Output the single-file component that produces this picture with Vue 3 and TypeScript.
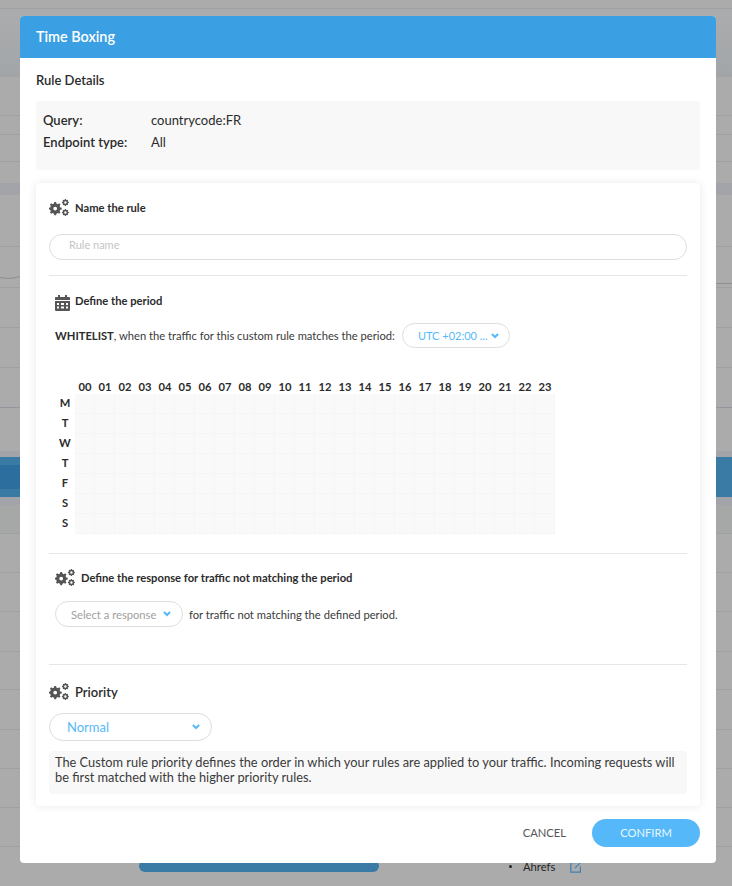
<script setup lang="ts">
const hours = Array.from({ length: 24 }, (_, i) => String(i).padStart(2, '0'))
const days = ['M', 'T', 'W', 'T', 'F', 'S', 'S']
const cellCount = 24 * 7

function gearPath(cx: number, cy: number, outer: number, root: number, hole: number, teeth: number): string {
  const parts: string[] = []
  const step = (Math.PI * 2) / teeth
  for (let i = 0; i < teeth; i++) {
    const a = i * step
    const pts: Array<[number, number]> = [
      [a - step * 0.3, root],
      [a - step * 0.17, outer],
      [a + step * 0.17, outer],
      [a + step * 0.3, root],
    ]
    for (const [ang, r] of pts) {
      const x = (cx + Math.cos(ang) * r).toFixed(2)
      const y = (cy + Math.sin(ang) * r).toFixed(2)
      parts.push(`${parts.length ? 'L' : 'M'}${x} ${y}`)
    }
  }
  parts.push('Z')
  parts.push(`M${cx - hole} ${cy}a${hole} ${hole} 0 1 0 ${hole * 2} 0a${hole} ${hole} 0 1 0 ${-hole * 2} 0Z`)
  return parts.join('')
}

const gears = [
  gearPath(6.2, 9.6, 6.6, 5.2, 1.9, 8),
  gearPath(16.4, 3.5, 3.5, 2.8, 1.2, 8),
  gearPath(16.4, 13.5, 3.5, 2.8, 1.2, 8),
].join('')

interface BgRow { h: number; kind: string }
const bgRows: BgRow[] = [
  { h: 9, kind: 'line' },
  { h: 68, kind: 'band-top' },
  { h: 39, kind: 'line' },
  { h: 19, kind: 'line' },
  { h: 27, kind: 'line' },
  { h: 21, kind: '' },
  { h: 12, kind: 'tint' },
  { h: 52, kind: 'line' },
  { h: 41, kind: 'line' },
  { h: 40, kind: 'line' },
  { h: 40, kind: 'line' },
  { h: 40, kind: 'line dark' },
  { h: 43, kind: '' },
  { h: 6, kind: 'tint' },
  { h: 40, kind: 'blue' },
  { h: 8, kind: 'tint' },
  { h: 29, kind: 'soft line' },
  { h: 39, kind: 'line' },
  { h: 39, kind: 'line' },
  { h: 40, kind: 'line' },
  { h: 38, kind: 'line' },
  { h: 40, kind: 'line' },
  { h: 39, kind: 'line' },
  { h: 39, kind: 'line' },
  { h: 39, kind: 'line' },
]
</script>

<template>
  <div class="page">
    <div class="backdrop">
      <div v-for="(r, i) in bgRows" :key="i" class="bg-row" :class="r.kind" :style="{ height: r.h + 'px' }">
        <div v-if="r.kind === 'blue'" class="bg-pill"></div>
      </div>
    </div>
    <svg class="bg-curve" width="20" height="8" viewBox="0 0 20 8" fill="none" stroke="#8f8f8f" stroke-width="1">
      <path d="M0 4.500C7 6 14 5.500 20 3.500" />
    </svg>
    <div class="bg-double"></div>

    <div class="under">
      <div class="under-bar"></div>
      <div class="under-item">
        <span class="bullet"></span>
        <span>Ahrefs</span>
        <svg width="12" height="12" viewBox="0 0 12 12" fill="none" stroke="#3d82b3" stroke-width="1.200">
          <path d="M6.500 1.600H.8v9.600h9.600V5.500M5 7.200 11 1.200" />
        </svg>
      </div>
    </div>

    <section class="modal">
      <header class="modal-head">Time Boxing</header>

      <div class="modal-body">
        <h2 class="rule-title">Rule Details</h2>

        <div class="details">
          <div class="detail-row"><b>Query:</b><span>countrycode:FR</span></div>
          <div class="detail-row"><b>Endpoint type:</b><span>All</span></div>
        </div>

        <div class="card">
          <div class="block name-block">
            <div class="title">
              <svg class="gears" width="20" height="17" viewBox="0 0 20 17"><path fill-rule="evenodd" :d="gears" /></svg>
              <span>Name the rule</span>
            </div>
            <div class="input">Rule name</div>
          </div>

          <div class="block period-block">
            <div class="title inset">
              <svg class="cal" width="15" height="16" viewBox="0 0 15 16">
                <path fill-rule="evenodd" d="M3 0h2v2h5V0h2v2h2a1 1 0 0 1 1 1v2H0V3a1 1 0 0 1 1-1h2zM0 6h15v9a1 1 0 0 1-1 1H1a1 1 0 0 1-1-1zm2 2v2h2V8zm4 0v2h3V8zm5 0v2h2V8zm-9 3.500v2h2v-2zm4 0v2h3v-2zm5 0v2h2v-2z" />
              </svg>
              <span>Define the period</span>
            </div>

            <div class="whitelist">
              <span><b>WHITELIST</b>, when the traffic for this custom rule matches the period:</span>
              <div class="select utc">
                <span>UTC +02:00 ...</span>
                <svg class="chev" width="8" height="6" viewBox="0 0 8 6"><path d="M.9 1 4 4 7.100 1" /></svg>
              </div>
            </div>

            <div class="grid-wrap">
              <div class="hours">
                <span v-for="h in hours" :key="h">{{ h }}</span>
              </div>
              <div class="grid-row">
                <div class="days">
                  <span v-for="(d, i) in days" :key="i">{{ d }}</span>
                </div>
                <div class="cells">
                  <i v-for="n in cellCount" :key="n"></i>
                </div>
              </div>
            </div>
          </div>

          <div class="block response-block">
            <div class="title inset">
              <svg class="gears" width="20" height="17" viewBox="0 0 20 17"><path fill-rule="evenodd" :d="gears" /></svg>
              <span>Define the response for traffic not matching the period</span>
            </div>
            <div class="response-line">
              <div class="select response">
                <span>Select a response</span>
                <svg class="chev" width="8" height="6" viewBox="0 0 8 6"><path d="M.9 1 4 4 7.100 1" /></svg>
              </div>
              <span>for traffic not matching the defined period.</span>
            </div>
          </div>

          <div class="block priority-block">
            <div class="title big">
              <svg class="gears" width="20" height="17" viewBox="0 0 20 17"><path fill-rule="evenodd" :d="gears" /></svg>
              <span>Priority</span>
            </div>
            <div class="select priority">
              <span>Normal</span>
              <svg class="chev" width="8" height="6" viewBox="0 0 8 6"><path d="M.9 1 4 4 7.100 1" /></svg>
            </div>
            <p class="note">The Custom rule priority defines the order in which your rules are applied to your traffic. Incoming requests will be first matched with the higher priority rules.</p>
          </div>
        </div>

        <footer class="actions">
          <button class="cancel" type="button">CANCEL</button>
          <button class="confirm" type="button">CONFIRM</button>
        </footer>
      </div>
    </section>
  </div>
</template>

<style>
html, body { margin: 0; background: #ababab; }
</style>

<style scoped>
.page {
  position: relative;
  width: 732px;
  height: 886px;
  overflow: hidden;
  background: #ababab;
  font-family: Lato, "Open Sans", sans-serif;
  color: #2b2b2b;
}
.backdrop {
  position: absolute;
  inset: 0;
  display: flex;
  flex-direction: column;
}
.bg-row { flex: none; box-sizing: border-box; display: flex; align-items: center; }
.bg-row.line { border-bottom: 1px solid #a0a0a0; }
.bg-row.line.dark { border-bottom-color: #96949c; }
.bg-row.band-top { background: linear-gradient(#a9abac 20%, #a2a5a8); }
.bg-row.tint { background: #a3a4aa; }
.bg-row.soft { background: #a6a8a8; }
.bg-row.blue { background: #3a7ba6; }
.bg-pill { width: 30px; height: 24px; border-radius: 0 12px 12px 0; background: #2c6f9e; }
.bg-curve { position: absolute; left: 0; top: 273px; }
.bg-double { position: absolute; left: 716px; top: 283px; width: 16px; height: 1px; background: #8f8f8f; }

.under { position: absolute; left: 139px; top: 860px; width: 460px; height: 20px; }
.under-bar {
  position: absolute; left: 0; top: 0; width: 240px; height: 12px;
  background: #3a7ba6; border-radius: 6px;
}
.under-item {
  position: absolute; left: 370px; top: -1px; display: flex; align-items: center;
  gap: 8px; font-size: 11.200px; color: #262626;
}
.under-item svg { margin-left: 7px; margin-top: 2px; }
.bullet { width: 3px; height: 3px; border-radius: 50%; background: #262626; margin-right: 3px; }

.modal {
  position: absolute;
  left: 20px;
  top: 16px;
  width: 696px;
  height: 847px;
  background: #fff;
  border-radius: 4px;
  overflow: hidden;
  display: flex;
  flex-direction: column;
}
.modal-head {
  height: 42px;
  flex: none;
  box-sizing: border-box;
  padding: 11px 16px 0;
  background: #3ba0e3;
  color: #fff;
  font-size: 14.400px;
  font-weight: 600;
  line-height: 19px;
}
.modal-body { padding: 0 16px; display: flex; flex-direction: column; flex: 1; }
.rule-title { margin: 14px 0 0; font-size: 13px; line-height: 16px; font-weight: 600; color: #2b2b2b; }
.details {
  margin-top: 13px;
  height: 69px;
  box-sizing: border-box;
  padding: 8px 7px;
  background: #f8f8f8;
  border-radius: 4px;
  font-size: 13px;
  line-height: 22px;
}
.detail-row { display: flex; }
.detail-row b { width: 108px; font-weight: 600; }
.card {
  margin-top: 13px;
  height: 623px;
  box-sizing: border-box;
  padding: 0 13px;
  background: #fff;
  border-radius: 4px;
  box-shadow: 0 0 10px rgba(0, 0, 0, .09);
  display: flex;
  flex-direction: column;
}
.block { border-bottom: 1px solid #e6e6e6; }
.title {
  display: flex;
  align-items: center;
  gap: 6px;
  font-size: 11.200px;
  font-weight: 700;
  color: #2b2b2b;
  line-height: 16px;
}
.title svg { fill: #555; flex: none; }
.chev { fill: none; stroke: #55b9f9; stroke-width: 2; flex: none; }
.name-block { height: 93px; box-sizing: border-box; padding-top: 16px; }
.input {
  margin-top: 18px;
  height: 26px;
  box-sizing: border-box;
  border: 1px solid #dedede;
  border-radius: 13px;
  padding: 0 19px;
  font-size: 11px;
  line-height: 20px;
  color: #c4c4c4;
}
.period-block { height: 278px; box-sizing: border-box; padding: 15px 6px 0; }
.period-block .title { gap: 5px; }
.cal { margin-top: 4px; }
.whitelist {
  margin-top: 12px;
  display: flex;
  align-items: center;
  gap: 7px;
  font-size: 11.200px;
  color: #3a3a3a;
}
.whitelist b { color: #2b2b2b; }
.select {
  display: flex;
  align-items: center;
  box-sizing: border-box;
  background: #fff;
  border: 1px solid #dedede;
  color: #55b9f9;
  white-space: nowrap;
}
.utc {
  width: 108px; height: 25px; border-radius: 13px;
  padding: 0 10px 0 15px; font-size: 11px; justify-content: space-between;
}
.grid-wrap { margin-top: 32px; }
.hours {
  display: grid;
  grid-template-columns: repeat(24, 20px);
  margin-left: 20px;
  font-size: 11.200px;
  font-weight: 700;
  line-height: 14px;
  color: #2b2b2b;
  text-align: center;
}
.grid-row { display: flex; }
.days {
  width: 20px;
  display: grid;
  grid-template-rows: repeat(7, 20px);
  font-size: 11.200px;
  font-weight: 700;
  text-align: center;
  line-height: 18px;
}
.cells {
  display: grid;
  grid-template-columns: repeat(24, 20px);
  grid-auto-rows: 20px;
  background: #f9f9f9;
}
.cells i { display: block; box-sizing: border-box; border-right: 1px solid #f5f5f5; border-bottom: 1px solid #f5f5f5; }
.response-block { height: 111px; box-sizing: border-box; padding: 15px 6px 0; }
.response-line {
  margin-top: 15px;
  display: flex;
  align-items: center;
  gap: 6px;
  font-size: 11.200px;
  color: #3a3a3a;
}
.response {
  width: 128px; height: 26px; border-radius: 13px;
  padding: 0 11px 0 15px; font-size: 11.200px; color: #a0a0a0; justify-content: space-between;
}
.priority-block { border-bottom: 0; padding-top: 18px; }
.title.big { font-size: 13px; font-weight: 600; }
.priority {
  margin-top: 13px;
  width: 163px; height: 28px; border-radius: 14px;
  padding: 0 11px 0 17px; font-size: 13px; justify-content: space-between;
}
.note {
  margin: 10px 0 0;
  height: 43px;
  box-sizing: border-box;
  padding: 4px 6px 0;
  background: #f8f8f8;
  border-radius: 4px;
  font-size: 12.800px;
  line-height: 15px;
  color: #3a3a3a;
}
.actions {
  margin-top: 13px;
  display: flex;
  justify-content: flex-end;
  align-items: center;
  gap: 26px;
}
button { font-family: inherit; border: 0; background: none; padding: 0 0 2px; }
.cancel { font-size: 11.200px; color: #555; }
.confirm {
  width: 108px; height: 28px; border-radius: 14px;
  background: #55b9f9; color: #e8f6ff; font-size: 11.200px;
}
</style>
